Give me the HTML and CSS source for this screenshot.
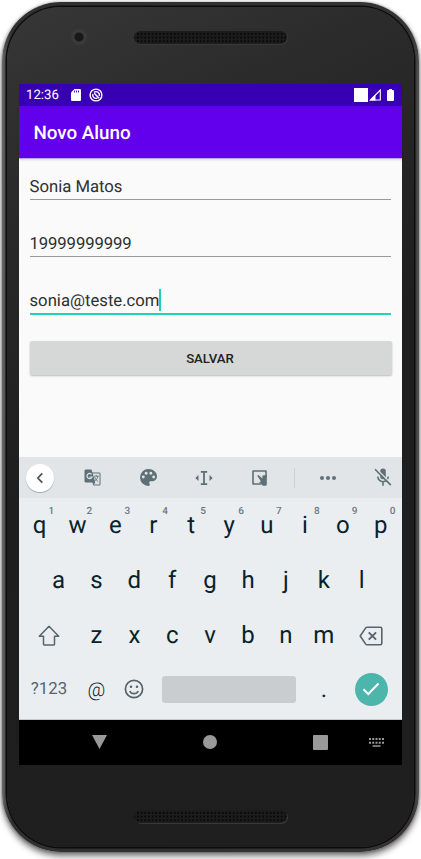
FILE: index.html
```html
<!DOCTYPE html>
<html lang="pt-BR">
<head>
<meta charset="utf-8">
<title>Novo Aluno</title>
<link rel="stylesheet" href="styles.css">
</head>
<body>
<div class="phone">
  <div class="bezel">
    <header class="top"><span class="camera"></span><span class="speaker"></span></header>
    <main class="screen">
      <div class="status">
        <span class="time">12:36</span>
        <svg class="sd" width="10" height="12" viewBox="0 0 10 12"><path d="M3.4 0H9a1 1 0 0 1 1 1v10a1 1 0 0 1-1 1H1a1 1 0 0 1-1-1V3.5z" fill="#fff"/><path d="M3.5 1.5v2M5.5 1.5v2M7.5 1.5v2" stroke="#3700b3" stroke-width=".9"/></svg>
        <svg class="sync" width="14" height="14" viewBox="0 0 14 14" fill="none" stroke="#fff" stroke-width="1.4"><circle cx="7" cy="7" r="5.9"/><path d="M5.2 5.2l5 5M5 4.4A3.3 3.3 0 0 1 10.2 8M3.9 5.9a3.3 3.3 0 0 0 4.5 4.1"/></svg>
        <span class="wifi"></span>
        <svg class="signal" width="12" height="12" viewBox="0 0 12 12"><path d="M11.3 1v10H1.4z" fill="none" stroke="#fff" stroke-width="1.1"/><path d="M6.5 5.5V11.5H.5z" fill="#fff"/></svg>
        <svg class="battery" width="7" height="12" viewBox="0 0 7 12"><path d="M2 0h3v1h1a1 1 0 0 1 1 1v9a1 1 0 0 1-1 1H1a1 1 0 0 1-1-1V2a1 1 0 0 1 1-1h1z" fill="#fff"/></svg>
      </div>
      <h1 class="appbar">Novo Aluno</h1>
      <section class="form">
        <div class="field"><span>Sonia Matos</span></div>
        <div class="field"><span class="digits">19999999999</span></div>
        <div class="field active"><span>sonia@teste.com</span><i class="caret"></i></div>
        <button class="save">SALVAR</button>
      </section>
      <section class="keyboard">
        <div class="tools">
          <span class="tool back"><span class="disc"><svg width="8" height="12" viewBox="0 0 8 12"><path d="M6.3 1.3L1.8 6l4.5 4.7" fill="none" stroke="#46535a" stroke-width="1.7"/></svg></span></span>
          <span class="tool"><svg width="17" height="17" viewBox="0 0 17 17"><path d="M1.8.5h5.6l1.1 3h6.7a1.3 1.3 0 0 1 1.3 1.3v10.4a1.3 1.3 0 0 1-1.3 1.3H9.5l-1.2-3H1.8A1.3 1.3 0 0 1 .5 12.2V1.8A1.3 1.3 0 0 1 1.8.5z" fill="#5f6f76"/><path d="M8.8 4.400h6.700v11.200H10l1.200-2z" fill="#e1e5e8"/><path d="M7.600 5.400A2.600 2.600 0 1 0 8 8H5.400" fill="none" stroke="#e1e5e8" stroke-width="1.200"/><path d="M9.800 7.200h5M12.300 6v1.200M14 7.400q-.8 2.800-3 4.500M10.700 8.200q1.100 2.800 3.500 4.500" fill="none" stroke="#5f6f76" stroke-width=".9"/></svg></span>
          <span class="tool"><svg width="17" height="17" viewBox="3 3 18 18"><path d="M12 3a9 9 0 0 0 0 18c.83 0 1.5-.67 1.5-1.5 0-.39-.15-.74-.39-1.01-.23-.26-.38-.61-.38-.99 0-.83.67-1.5 1.5-1.5H16c2.76 0 5-2.24 5-5 0-4.42-4.03-8-9-8z" fill="#5f6f76"/><g fill="#e1e5e8"><circle cx="6.5" cy="11.5" r="1.5"/><circle cx="9.5" cy="7.5" r="1.5"/><circle cx="14.5" cy="7.5" r="1.5"/><circle cx="17.5" cy="11.5" r="1.5"/></g></svg></span>
          <span class="tool"><svg width="18" height="16" viewBox="0 0 18 16"><path d="M5.800 1.900h6.400M5.800 14.100h6.400M9 1.500v13" stroke="#5f6f76" stroke-width="1.800"/><path d="M3.500 5v6L.3 8zM14.500 5v6l3.200-3z" fill="#5f6f76"/></svg></span>
          <span class="tool"><svg width="16" height="16" viewBox="0 0 16 16"><path d="M14 8V1H1v13h8" fill="none" stroke="#5f6f76" stroke-width="1.600" stroke-linejoin="round"/><path d="M5.200 5.800L6.400 5l4 3.600V5.500L14.800 5v9.500q0 1.200-1.200 1.200h-2.800L7 12l2-.6z" fill="#5f6f76"/></svg></span>
          <span class="divider"></span>
          <span class="tool"><svg width="16" height="4" viewBox="0 0 16 4" fill="#5f6f76"><circle cx="2" cy="2" r="2"/><circle cx="8" cy="2" r="2"/><circle cx="14" cy="2" r="2"/></svg></span>
          <span class="tool mic"><svg width="18" height="19" viewBox="0 0 18 19"><path d="M6.200 3.200a2.800 2.800 0 0 1 5.600 0v5.200a2.800 2.800 0 0 1-5.600 0z" fill="#5f6f76"/><path d="M3.800 8.500a5.200 5.200 0 0 0 10.400 0M9 13.800v4" fill="none" stroke="#5f6f76" stroke-width="1.600"/><path d="M2.200.8l15.500 15.500" stroke="#e1e5e8" stroke-width="1.600"/><path d="M1 1.300l15.800 15.800" stroke="#5f6f76" stroke-width="1.600"/></svg></span>
        </div>
        <div class="row">
          <span class="key">q<sup>1</sup></span><span class="key">w<sup>2</sup></span><span class="key">e<sup>3</sup></span><span class="key">r<sup>4</sup></span><span class="key">t<sup>5</sup></span><span class="key">y<sup>6</sup></span><span class="key">u<sup>7</sup></span><span class="key">i<sup>8</sup></span><span class="key">o<sup>9</sup></span><span class="key">p<sup>0</sup></span>
        </div>
        <div class="row home">
          <span class="key">a</span><span class="key">s</span><span class="key">d</span><span class="key">f</span><span class="key">g</span><span class="key">h</span><span class="key">j</span><span class="key">k</span><span class="key">l</span>
        </div>
        <div class="row">
          <span class="wide"><svg width="22" height="21" viewBox="0 0 22 21"><path d="M11 1.200L1.300 11.300h4.200v8q0 .6.600.600h9.800q.6 0 .6-.6v-8h4.200z" fill="none" stroke="#56656c" stroke-width="1.500" stroke-linejoin="round"/></svg></span>
          <span class="key">z</span><span class="key">x</span><span class="key">c</span><span class="key">v</span><span class="key">b</span><span class="key">n</span><span class="key">m</span>
          <span class="wide"><svg width="24" height="20" viewBox="0 0 24 20" fill="none" stroke="#56656c" stroke-width="1.600"><path d="M8 1.200h13.200q1.600 0 1.600 1.600v14.400q0 1.600-1.600 1.600H8q-.8 0-1.300-.7L1.200 10l5.500-8.100Q7.200 1.200 8 1.200z" stroke-linejoin="round"/><path d="M9.700 6.300l7.400 7.400M17.100 6.300l-7.400 7.400" stroke-width="1.900"/></svg></span>
        </div>
        <div class="row bottom">
          <span class="wide sym">?123</span>
          <span class="key at">@</span>
          <span class="key"><svg width="20" height="20" viewBox="0 0 20 20" fill="none" stroke="#56656c" stroke-width="1.700"><circle cx="10" cy="10" r="8.600"/><path d="M5.800 12a4.600 4.600 0 0 0 8.400 0"/><g fill="#56656c" stroke="none"><circle cx="7" cy="7.700" r="1.300"/><circle cx="13" cy="7.700" r="1.300"/></g></svg></span>
          <span class="space"></span>
          <span class="key dot">.</span>
          <span class="wide"><span class="enter"><svg width="18" height="14" viewBox="0 0 18 14"><path d="M1.500 7.200l4.800 4.800L16.500 1.500" fill="none" stroke="#fff" stroke-width="2"/></svg></span></span>
        </div>
      </section>
      <nav class="nav">
        <svg width="15" height="14" viewBox="0 0 15 14"><path d="M0 0h15L7.500 14z" fill="#999"/></svg>
        <svg width="14" height="14" viewBox="0 0 14 14"><circle cx="7" cy="7" r="7" fill="#999"/></svg>
        <svg width="15" height="15" viewBox="0 0 15 15"><rect width="15" height="15" rx="1" fill="#999"/></svg>
        <svg width="15" height="9" viewBox="0 0 15 9" stroke="#999"><path d="M0 1h15M0 4.700h15" stroke-width="2" stroke-dasharray="2 1.250"/><path d="M3.500 8h8" stroke-width="1.500"/></svg>
      </nav>
    </main>
    <footer class="chin"><span class="speaker"></span></footer>
  </div>
</div>
</body>
</html>
```
FILE: styles.css
```css
* { box-sizing: border-box; }
body {
  margin: 0;
  padding: 2px 0 0 2px;
  height: 859px;
  overflow: hidden;
  background: #fff;
  font-family: Roboto, sans-serif;
  text-rendering: geometricPrecision;
}
svg { display: block; flex: none; }
.phone {
  width: 417px;
  height: 850px;
  padding: 5px;
  border-radius: 59px;
  background: linear-gradient(90deg, #6a6a6a 0, #484848 4px, #303030 10px, #353334 408px, #454243 415px, #555 417px);
  box-shadow: 0 4px 6px rgba(0, 0, 0, .55), 0 0 3px rgba(0, 0, 0, .35);
}
.bezel {
  height: 840px;
  padding: 0 12px;
  border-radius: 54px;
  background: linear-gradient(155deg, #373737 0, #2b2b2b 18%, #1e1e1e 48%, #1f1f20 100%);
  box-shadow: 0 0 0 1.5px #0c0c0c;
}
.top {
  display: flex;
  align-items: flex-start;
  height: 77px;
  padding: 22px 0 0 52px;
}
.camera {
  width: 16px;
  height: 16px;
  border-radius: 50%;
  background: radial-gradient(circle, #17171d 0 4px, #3a3a3b 5px);
}
.speaker {
  width: 153px;
  height: 13px;
  border-radius: 7px;
  background: radial-gradient(circle, #080808 0 1px, transparent 1.3px) 2px 1px / 3.7px 3.7px #1c1c1c;
  box-shadow: 1px 1px 0 #393939;
}
.top .speaker { margin: 2px 0 0 47px; }
.chin { padding: 45px 0 0 115px; }
.chin .speaker { display: block; }
.screen {
  width: 383px;
  height: 681px;
  display: flex;
  flex-direction: column;
  background: #fafafa;
}
.status {
  display: flex;
  align-items: center;
  height: 22px;
  padding: 0 8px 0 7px;
  background: #3700b3;
  color: #fff;
}
.time { width: 45px; font-size: 13.2px; line-height: 22px; padding-top: 1px; }
.sync { margin-left: 8px; }
.wifi { width: 14px; height: 14px; margin-left: auto; background: #fff; }
.signal { margin-left: 1px; }
.battery { margin-left: 6px; }
.appbar {
  flex: none;
  height: 53px;
  margin: 0;
  padding-left: 14.5px;
  background: #6200ee;
  border-bottom: 1px solid #b9aee0;
  box-shadow: 0 1px 2px rgba(0, 0, 0, .12);
  color: #fff;
  font-size: 18.8px;
  font-weight: 500;
  line-height: 54px;
}
.form { flex: 1; padding: 14px 11px 0; }
.field {
  display: flex;
  height: 27px;
  margin-bottom: 30px;
  border-bottom: 1px solid #999;
  color: #2f2f2f;
  font-size: 16.7px;
  line-height: 29px;
}
.field span { margin-left: -.5px; }
.digits { letter-spacing: -.1px; }
.field.active { height: 28px; margin-bottom: 27px; border-bottom: 2px solid #20d3bd; }
.caret { width: 2px; height: 22px; margin: 2px 0 0 -.5px; background: #20cfbb; }
.save {
  display: block;
  width: 362px;
  height: 34px;
  margin: -1px 0 0 -.5px;
  padding: 0 1px 0 0;
  border: 0;
  border-radius: 2px;
  background: #d6d7d7;
  box-shadow: 0 1px 2px rgba(0, 0, 0, .25);
  color: #222;
  font: 500 13.2px/36px Roboto, sans-serif;
}
.keyboard { height: 263px; background: #ebeef1; border-bottom: 1px solid #c5cacd; }
.tools {
  display: grid;
  grid-template-columns: 45px repeat(4, 56px) 12px 56px 46px;
  align-items: center;
  height: 41px;
  background: #e1e5e8;
}
.tool { display: flex; justify-content: center; }
.back { padding-right: 3px; }
.mic { padding-left: 8px; }
.disc, .enter {
  display: flex;
  align-items: center;
  justify-content: center;
  width: 28px;
  height: 28px;
  border-radius: 50%;
  background: #fff;
  box-shadow: 0 1px 1px rgba(0, 0, 0, .25);
}
.divider { width: 1px; height: 20px; margin: auto; background: #cdd2d5; }
.row { display: flex; align-items: center; height: 55px; padding: 0 2.4px 0 1.6px; }
.home { padding: 0 21.4px 0 20.6px; }
.key {
  position: relative;
  display: flex;
  flex: 1;
  justify-content: center;
  color: #06232c;
  font-size: 24px;
  line-height: 55px;
}
.key sup {
  position: absolute;
  left: 28px;
  top: 7px;
  color: #6b7a80;
  font-size: 10px;
  font-weight: 500;
  line-height: 14px;
}
.wide { display: flex; align-items: center; justify-content: center; width: 57px; height: 55px; }
.bottom { height: 52px; }
.sym { color: #56656c; font-size: 16.8px; }
.bottom .key { flex: 0 0 38px; align-items: center; }
.bottom .at { font-size: 19.5px; font-weight: 300; }
.bottom .dot { line-height: 52px; }
.space { width: 134px; height: 27px; margin: 0 9px; border-radius: 3px; background: #c9cdcf; }
.enter { width: 33px; height: 33px; background: #4db6ac; box-shadow: none; }
.nav {
  display: grid;
  grid-template-columns: 111px 110px 110px 1fr;
  justify-items: center;
  align-items: center;
  height: 45px;
  padding: 0 0 1px 25px;
  background: #000;
}
.nav svg:last-child { margin-left: -25px; }
```
